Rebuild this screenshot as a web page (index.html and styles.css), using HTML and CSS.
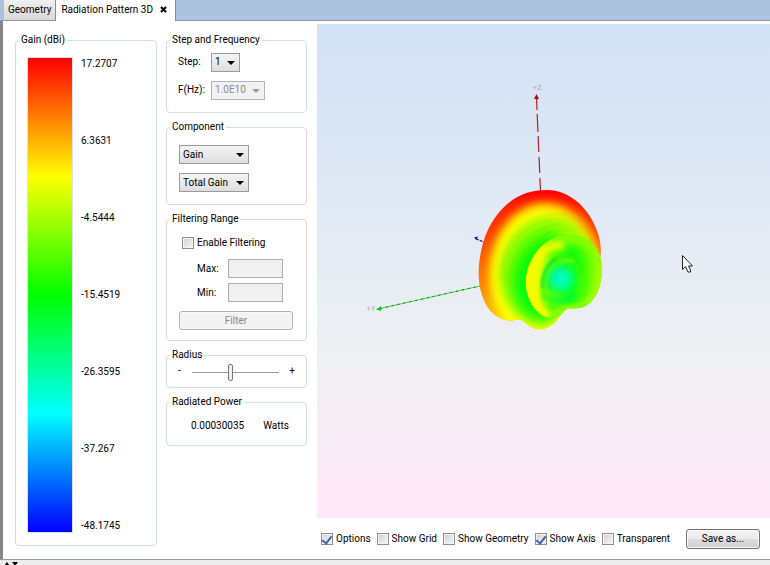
FILE: index.html
```html
<!DOCTYPE html>
<html lang="en">
<head>
<meta charset="utf-8">
<title>Radiation Pattern 3D</title>
<link rel="stylesheet" href="styles.css">
</head>
<body>
<div class="window">
  <nav class="tabs">
    <button class="tab" type="button">Geometry</button>
    <div class="tab active">
      <span>Radiation Pattern 3D</span>
      <button class="close" type="button" aria-label="Close">
        <svg width="7" height="7" viewBox="0 0 7 7"><path d="M1 1 6 6M6 1 1 6" stroke="#000" stroke-width="2"/></svg>
      </button>
    </div>
  </nav>

  <main class="content">
    <fieldset class="group gain">
      <legend>Gain (dBi)</legend>
      <div class="scale">
        <div class="colorbar"></div>
        <div class="ticks">
          <span>17.2707</span>
          <span>6.3631</span>
          <span>-4.5444</span>
          <span>-15.4519</span>
          <span>-26.3595</span>
          <span>-37.267</span>
          <span>-48.1745</span>
        </div>
      </div>
    </fieldset>

    <div class="options">
      <fieldset class="group step">
        <legend>Step and Frequency</legend>
        <div class="field">
          <label for="step">Step:</label>
          <span class="combo combo-s"><select id="step"><option>1</option></select></span>
        </div>
        <div class="field">
          <label for="freq">F(Hz):</label>
          <span class="combo combo-m disabled"><select id="freq" disabled><option>1.0E10</option></select></span>
        </div>
      </fieldset>

      <fieldset class="group component">
        <legend>Component</legend>
        <span class="combo combo-l"><select aria-label="Component"><option>Gain</option></select></span>
        <span class="combo combo-l"><select aria-label="Gain type"><option>Total Gain</option></select></span>
      </fieldset>

      <fieldset class="group filtering">
        <legend>Filtering Range</legend>
        <label class="check"><input type="checkbox">Enable Filtering</label>
        <div class="range"><label for="max">Max:</label><input id="max" type="text" disabled></div>
        <div class="range"><label for="min">Min:</label><input id="min" type="text" disabled></div>
        <button class="button filter" type="button" disabled>Filter</button>
      </fieldset>

      <fieldset class="group radius">
        <legend>Radius</legend>
        <div class="slider">
          <span>-</span>
          <input type="range" min="0" max="100" value="44" aria-label="Radius">
          <span>+</span>
        </div>
      </fieldset>

      <fieldset class="group power">
        <legend>Radiated Power</legend>
        <div class="reading"><span>0.00030035</span><span>Watts</span></div>
      </fieldset>
    </div>

    <section class="view">
      <svg class="canvas" viewBox="317 24 453 494" preserveAspectRatio="xMidYMid meet">
        <defs>
          <clipPath id="outline">
            <path d="M547 190C566 190 583 203 592 220C600 235 602 247 600 258L602 268C602 279 599 291 593 299C587 307 579 309 569 308C563 310 560 317 554 323C548 328 543 330 537 329C530 328 525 321 519 319C514 321 506 321 500 318C491 314 485 305 482 295C479 286 478 276 479 265C481 242 489 222 503 208C516 195 530 190 547 190Z"/>
          </clipPath>
          <clipPath id="lobe">
            <path d="M550 318C539 317 528 304 526 287C524 267 536 247 552 239C562 234 576 233 586 239C596 245 602 256 602 268C602 281 599 294 591 302C585 308 578 309 569 308C562 309 559 318 550 318Z"/>
          </clipPath>
          <linearGradient id="rim" x1="520" y1="190" x2="520" y2="330" gradientUnits="userSpaceOnUse">
            <stop offset="0" stop-color="#f00"/>
            <stop offset=".12" stop-color="#ff2000"/>
            <stop offset=".4" stop-color="#ff5000"/>
            <stop offset=".7" stop-color="#ff8800"/>
            <stop offset=".9" stop-color="#ffc000"/>
            <stop offset="1" stop-color="#ff0"/>
          </linearGradient>
          <linearGradient id="lobe-fill" x1="526" y1="270" x2="602" y2="276" gradientUnits="userSpaceOnUse">
            <stop offset="0" stop-color="#fff000"/>
            <stop offset=".16" stop-color="#e8ff00"/>
            <stop offset=".34" stop-color="#60ff00"/>
            <stop offset=".6" stop-color="#10ff10"/>
            <stop offset=".8" stop-color="#50ff00"/>
            <stop offset="1" stop-color="#b8ff00"/>
          </linearGradient>
          <radialGradient id="core" cx="561" cy="279" r="20" gradientUnits="userSpaceOnUse">
            <stop offset="0" stop-color="#00ffc0"/>
            <stop offset=".35" stop-color="#00ffa0"/>
            <stop offset=".65" stop-color="#00ff70" stop-opacity=".6"/>
            <stop offset="1" stop-color="#00ff40" stop-opacity="0"/>
          </radialGradient>
          <filter id="soft" x="-30%" y="-30%" width="160%" height="160%"><feGaussianBlur stdDeviation="4"/></filter>
          <filter id="soft-s" x="-30%" y="-30%" width="160%" height="160%"><feGaussianBlur stdDeviation="2"/></filter>
          <filter id="soft-xs" x="-30%" y="-30%" width="160%" height="160%"><feGaussianBlur stdDeviation="1"/></filter>
        </defs>

        <g class="axis-label">
          <text x="532" y="90">+Z</text>
          <text x="366" y="311">+Y</text>
        </g>
        <path d="M536.5 98 540.5 191" stroke="#b81c24" stroke-width="1.2" stroke-dasharray="12 4 18 4 16 5 16 5 20" fill="none"/>
        <path d="M536.5 94 534 99H539Z" fill="#a00c10"/>
        <path d="M378 309 480 286" stroke="#40d848" stroke-width="1.2"/>
        <path d="M380 308.5 480 286" stroke="#167a1c" stroke-width="1" stroke-dasharray="2 4"/>
        <path d="M376 309.5 381 306V311Z" fill="#18c818"/>
        <path d="M476 239 484 242" stroke="#202080" stroke-width="1.2" stroke-dasharray="3 1"/>
        <path d="M474 237.5 478 236.5 476.5 240Z" fill="#101080"/>

        <g clip-path="url(#outline)">
          <rect x="470" y="185" width="140" height="150" fill="url(#rim)"/>
          <ellipse cx="546" cy="276" rx="58" ry="74" fill="#ffa800" filter="url(#soft)"/>
          <ellipse cx="544" cy="278" rx="53" ry="71" fill="#ff0" filter="url(#soft)"/>
          <path d="M499 278C500 240 524 217 551 217C577 219 593 242 596 274L560 325C538 336 503 316 499 278Z" fill="#98ff00" filter="url(#soft)"/>
          <path d="M508 284C508 250 530 229 553 229L584 255 561 310C542 332 512 318 508 284Z" fill="#48ff00" filter="url(#soft)"/>
          <path d="M517 284C517 258 532 244 550 240L575 260 558 308C542 324 519 312 517 284Z" fill="#00ff08" filter="url(#soft)"/>
          <path d="M524 324C532 336 549 333 562 314" stroke="#d8ff00" stroke-width="4" fill="none" filter="url(#soft-s)"/>
          <g fill="none" stroke="#55b800" stroke-opacity=".3" stroke-width="1" filter="url(#soft-xs)">
            <path d="M501 280C501 244 522 217 554 214C574 214 588 226 594 244"/>
            <path d="M505 285C502 248 525 222 553 219C571 218 584 228 591 242"/>
            <path d="M510 286C508 253 527 230 553 225C569 222 579 229 586 238"/>
            <path d="M516 287C515 259 531 237 555 231C567 228 575 231 582 237"/>
            <path d="M521 290C517 266 531 246 548 239"/>
          </g>
        </g>

        <g clip-path="url(#lobe)">
          <rect x="520" y="230" width="90" height="92" fill="url(#lobe-fill)"/>
          <path d="M550 316C528 308 522 262 552 239" stroke="#f4fc00" stroke-width="8" fill="none" filter="url(#soft-s)"/>
          <path d="M546 248C566 228 594 236 602 266" stroke="#90ff00" stroke-width="13" fill="none" filter="url(#soft)"/>
          <path d="M535 264C542 249 553 244 563 246" stroke="#f0fc00" stroke-width="6" fill="none" filter="url(#soft-s)"/>
          <path d="M549 316C558 315 559 308 568 307C582 309 597 299 601 274" stroke="#a0ff00" stroke-width="5" fill="none" filter="url(#soft-s)"/>
          <path d="M545 300C539 278 550 256 568 255C577 256 583 264 582 275" stroke="#28f008" stroke-width="3" fill="none" filter="url(#soft-s)"/>
          <path d="M547 290C545 272 556 258 574 261" stroke="#60fa00" stroke-width="4" fill="none" filter="url(#soft-xs)"/>
          <path d="M542 288C542 273 548 263 557 258" stroke="#00dc40" stroke-width="1.5" fill="none" filter="url(#soft-xs)"/>
          <path d="M550 290C549 278 555 269 568 266" stroke="#10e428" stroke-width="2" fill="none" filter="url(#soft-xs)"/>
          <path d="M547 296C552 303 564 303 575 294" stroke="#00f840" stroke-width="3" fill="none" filter="url(#soft-s)"/>
          <circle cx="561" cy="279" r="20" fill="url(#core)"/>
          <path d="M556 283C554 277 557 272 561 270" stroke="#00eacb" stroke-width="2" fill="none" filter="url(#soft-xs)"/>
        </g>

        <path d="M682.5 255.5V269.5L685.5 266.5 688 272H690.5V270L688.5 266H692.5Z" fill="#fff" stroke="#202030"/>
      </svg>

      <div class="toolbar">
        <label class="check"><input type="checkbox" checked>Options</label>
        <label class="check"><input type="checkbox">Show Grid</label>
        <label class="check"><input type="checkbox">Show Geometry</label>
        <label class="check"><input type="checkbox" checked>Show Axis</label>
        <label class="check"><input type="checkbox">Transparent</label>
        <button class="button save" type="button">Save as...</button>
      </div>
    </section>
  </main>

  <footer class="splitter">
    <svg width="14" height="4" viewBox="0 0 14 4"><path d="M0 4 3 0 6 4ZM8 0H14L11 4Z" fill="#000"/></svg>
  </footer>
</div>
</body>
</html>
```

FILE: styles.css
```css
* { box-sizing: border-box; }

body {
  margin: 0;
  background: #fff;
  color: #000;
  font: 10px/14px Roboto, "Liberation Sans", sans-serif;
}

button, input, select { font: inherit; color: inherit; margin: 0; }

.window {
  display: flex;
  flex-direction: column;
  min-height: 100vh;
}

/* Tabs */
.tabs {
  display: flex;
  height: 21px;
  padding-left: 4px;
  background: #abc1de;
  border-bottom: 1px solid #8a98a8;
}

.tab {
  display: flex;
  align-items: center;
  padding: 0 4px;
  border: 0;
  border-right: 1px solid #8c8c8c;
  background: linear-gradient(#f0f0f0, #d8d8d8);
}

.tab.active {
  gap: 7px;
  height: 21px;
  padding: 0 8px 2px 5px;
  background: #fff;
}

.close {
  display: flex;
  padding: 0;
  border: 0;
  background: none;
}

/* Main area */
.content {
  flex: 1;
  display: flex;
  align-items: stretch;
  border-left: 3px solid #858585;
  padding-left: 12px;
}

.group {
  --inset: 12px;
  min-width: 0;
  margin: 0;
  padding: 0 var(--inset);
  border: 1px solid #d3dde2;
  border-radius: 4px;
}

.group legend {
  height: 14px;
  margin-left: calc(3px - var(--inset));
  padding: 0 2px;
}

.gain {
  --inset: 11px;
  width: 142px;
  margin: 12px 9px 13px 0;
  padding-top: 10px;
  padding-bottom: 12px;
}

.scale { display: flex; gap: 8px; height: 100%; }

.colorbar {
  width: 46px;
  border: 1px solid #dde;
  background: linear-gradient(#f00, #ff0 25%, #0f0 50%, #0ff 75%, #00f);
}

.ticks {
  display: flex;
  flex-direction: column;
  justify-content: space-between;
}

.options {
  display: flex;
  flex-direction: column;
  gap: 7px;
  width: 141px;
  margin: 12px 10px 0 0;
}

.step { --inset: 11px; height: 80px; padding-top: 1px; }
.component { height: 85px; padding-top: 11px; }
.filtering { height: 129px; padding-top: 10px; }
.radius { --inset: 11px; height: 40px; }
.power { --inset: 24px; height: 51px; padding-top: 10px; padding-right: 17px; }

.field { display: flex; align-items: center; height: 28px; }
.field label { width: 33px; }

.combo { position: relative; display: block; }
.combo-s { width: 29px; }
.combo-m { width: 54px; }
.combo-l { width: 70px; }
.combo-l + .combo-l { margin-top: 9px; }

.combo select {
  display: block;
  appearance: none;
  width: 100%;
  height: 19px;
  padding: 0 3px;
  border: 1px solid #9a9a9a;
  border-radius: 0;
  background: linear-gradient(#f4f4f4, #dedede);
}

.combo::after {
  content: "";
  position: absolute;
  right: 5px;
  top: 8px;
  border: 4px solid transparent;
  border-top-color: #000;
  border-bottom: 0;
  pointer-events: none;
}

.disabled select { color: #8c8c8c; opacity: 1; border-color: #b4b4b4; background: #f2f2f2; }
.disabled::after { border-top-color: #999; }

.check { display: flex; align-items: center; gap: 3px; white-space: nowrap; }

.check input {
  appearance: none;
  display: grid;
  place-items: center;
  width: 12px;
  height: 12px;
  border: 1px solid #8e8f8f;
  background: linear-gradient(135deg, #ccd0d4, #f8f8f8);
  box-shadow: inset 0 0 0 1px #f4f4f4;
}

.check input:checked::after {
  content: "";
  width: 4px;
  height: 8px;
  margin-bottom: 2px;
  border: solid #4660a8;
  border-width: 0 2px 2px 0;
  transform: rotate(38deg);
}

.filtering .check { margin: 0 0 9px 3px; }

.range { display: flex; justify-content: space-between; margin: 0 11px 5px 18px; align-items: center; }

.range input {
  width: 55px;
  height: 19px;
  padding: 0 3px;
  border: 1px solid #afafaf;
  background: #f0f0f0;
}

.button {
  border: 1px solid #707070;
  border-radius: 3px;
  background: linear-gradient(#f2f2f2 0%, #ebebeb 50%, #dddddd 50%, #cfcfcf);
  box-shadow: inset 0 0 0 1px #fafafa;
}

.filter {
  display: block;
  width: 114px;
  height: 19px;
  margin-top: 9px;
  padding: 0;
  border-color: #b0b4b4;
  background: #f3f3f3;
  color: #868686;
}

.slider { display: flex; align-items: center; justify-content: space-between; }

.slider input {
  appearance: none;
  width: 87px;
  height: 18px;
  background: linear-gradient(#999, #999) center 10px / 100% 1px no-repeat;
}

.slider input::-webkit-slider-thumb {
  appearance: none;
  width: 5px;
  height: 17px;
  margin-top: 2px;
  border: 1px solid #777;
  border-radius: 2px;
  background: #f0f0f0;
}

.reading { display: flex; justify-content: space-between; }

/* 3D view */
.view {
  flex: 1;
  display: flex;
  flex-direction: column;
  min-width: 0;
  padding-top: 3px;
}

.canvas {
  flex: 1;
  display: block;
  width: 100%;
  min-height: 0;
  background: linear-gradient(#d2e1f4, #e0e9f5 35%, #f0f0f2 70%, #f8ecf5 85%, #ffe8f8);
}

.axis-label { font: 7px "DejaVu Sans Condensed", sans-serif; fill: #a4a8b0; }

.toolbar {
  display: flex;
  align-items: center;
  gap: 6px;
  height: 41px;
  padding: 0 10px 0 4px;
}

.save {
  flex: none;
  width: 74px;
  height: 20px;
  margin-left: auto;
  padding: 0;
  white-space: nowrap;
}

.splitter {
  display: flex;
  height: 6px;
  padding: 2px 0 0 4px;
  border-top: 1px solid #999;
  background: #ececec;
}
```
